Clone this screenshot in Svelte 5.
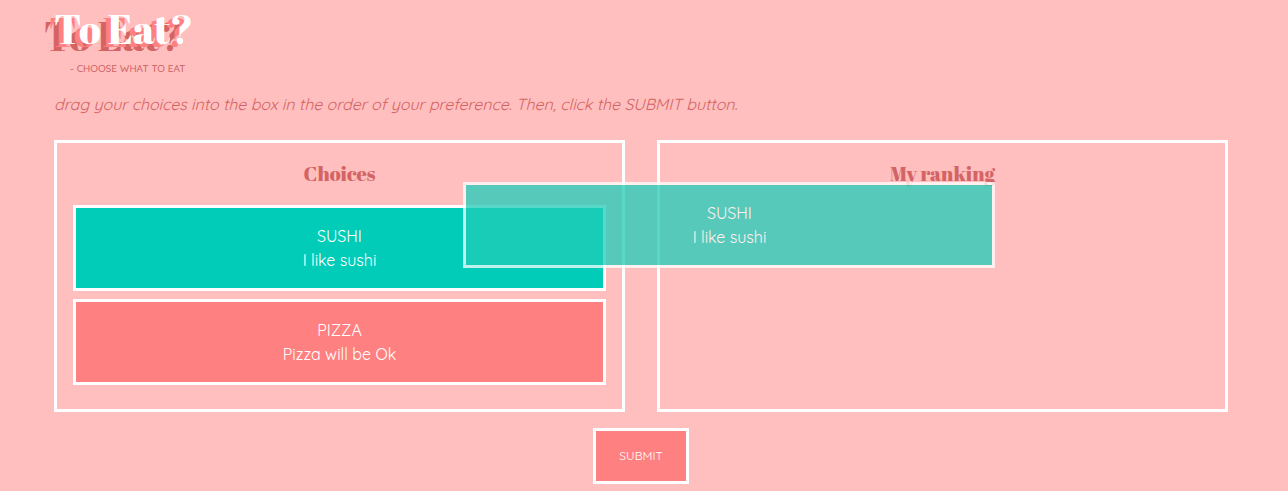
<script>
  const choices = [
    { name: 'SUSHI', note: 'I like sushi', tone: 'teal' },
    { name: 'PIZZA', note: 'Pizza will be Ok', tone: 'coral' }
  ];
</script>

<main>
  <header>
    <h1>To Eat?</h1>
    <p class="tagline">- CHOOSE WHAT TO EAT</p>
  </header>
  <p class="hint">drag your choices into the box in the order of your preference. Then, click the SUBMIT button.</p>

  <div class="boards">
    <section>
      <h2>Choices</h2>
      {#each choices as c}
        <div class="item {c.tone}">
          <span>{c.name}</span>
          <span>{c.note}</span>
        </div>
      {/each}
    </section>
    <section>
      <h2>My ranking</h2>
    </section>
  </div>

  <button>SUBMIT</button>

  <div class="item ghost">
    <span>SUSHI</span>
    <span>I like sushi</span>
  </div>
</main>

<style>
  :global(body) {
    background: #ffbfbf;
    overflow: hidden;
  }
  main {
    position: relative;
    box-sizing: border-box;
    height: 491px;
    padding: 0 60px 0 54px;
    font-family: Quicksand, Lato, sans-serif;
    font-size: 16px;
    line-height: 24px;
    display: flex;
    flex-direction: column;
  }
  h1, h2, p { margin: 0; }
  h1, h2 {
    font-family: 'Abril Fatface', 'Liberation Serif', serif;
    font-weight: 400;
    white-space: nowrap;
  }
  header { height: 92px; }
  h1 {
    padding-top: 3px;
    font-size: 40px;
    line-height: 52px;
    color: #fff;
    text-shadow: -5px 3px 0 #ff8080, -10px 7px 0 #d46464;
  }
  .tagline {
    padding: 6px 0 0 16px;
    font-size: 10px;
    line-height: 15px;
    font-weight: 500;
    color: #cc6060;
  }
  .hint {
    height: 48px;
    font-style: italic;
    font-weight: 400;
    white-space: nowrap;
    color: #d46464;
    letter-spacing: -0.035px;
  }
  .boards {
    display: grid;
    grid-template-columns: 571px 571px;
    gap: 32px;
  }
  section {
    box-sizing: border-box;
    height: 272px;
    border: 3px solid #fff;
    padding: 16px;
    display: flex;
    flex-direction: column;
    gap: 8px;
  }
  h2 {
    height: 38px;
    font-size: 20px;
    line-height: 30px;
    text-align: center;
    color: #d46464;
  }
  .item {
    box-sizing: border-box;
    height: 86px;
    border: 3px solid #fff;
    padding: 16px;
    display: flex;
    flex-direction: column;
    align-items: center;
    color: #fff;
    font-weight: 400;
  }
  .teal { background: #00ccb8; }
  .coral { background: #ff8080; }
  .ghost {
    position: absolute;
    left: 463px;
    top: 182px;
    width: 532px;
    padding-left: 17px;
    background: #20cdb9;
    opacity: 0.75;
  }
  button {
    align-self: center;
    box-sizing: border-box;
    width: 96px;
    height: 56px;
    margin-top: 16px;
    border: 3px solid #fff;
    padding: 0;
    background: #ff8080;
    color: #fff;
    font: 400 12px/18px Quicksand, Lato, sans-serif;
  }
</style>
